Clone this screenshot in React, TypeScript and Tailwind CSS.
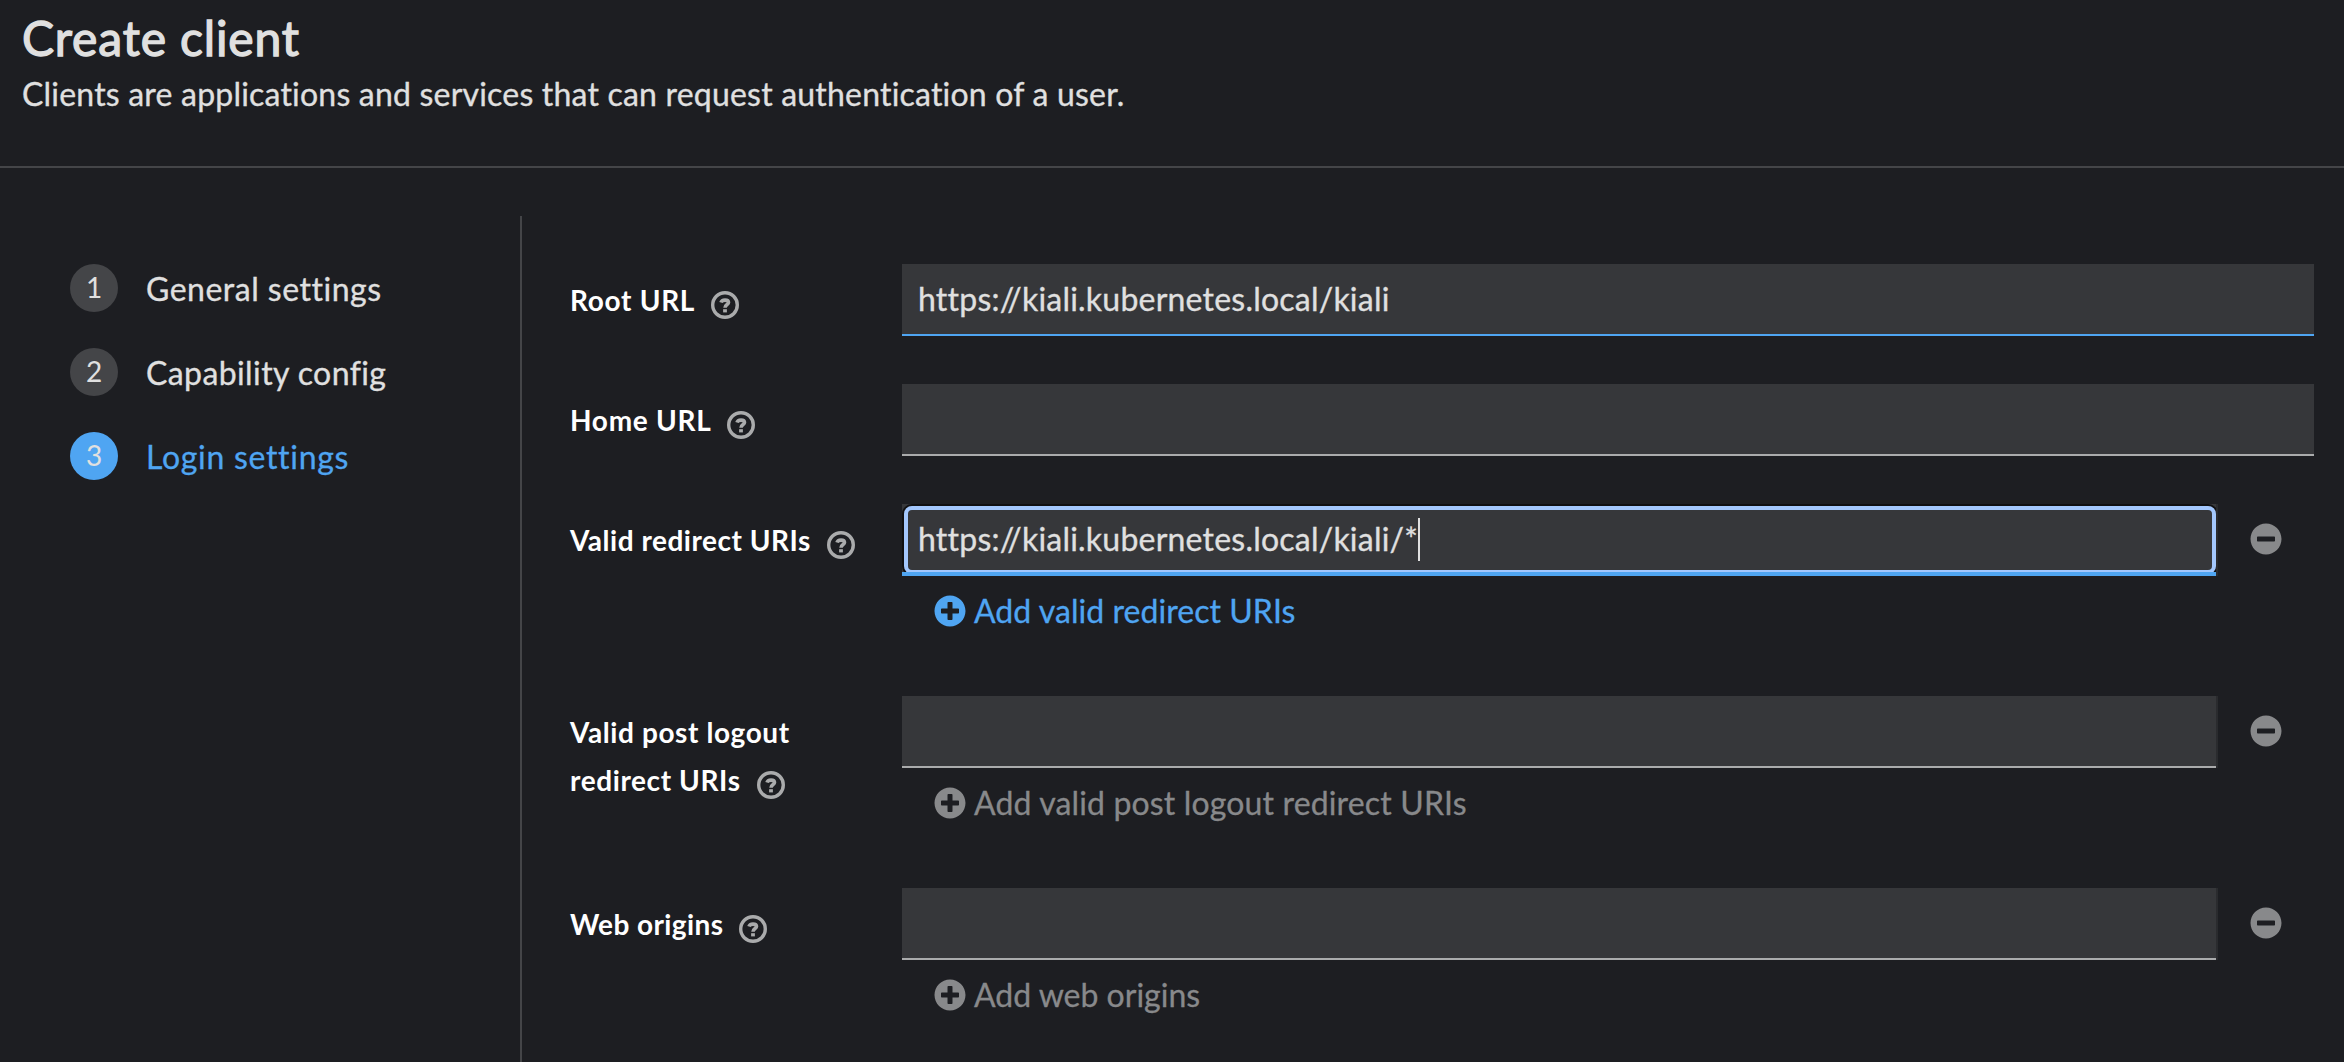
import React from "react";
import { FaMinusCircle, FaPlusCircle } from "react-icons/fa";

function HelpIcon() {
  return (
    <svg viewBox="0 0 28 28" fill="none" stroke="#aaabac" className="relative top-[8px] ml-4 inline-block size-7 align-baseline">
      <circle cx="14" cy="14" r="12.3" strokeWidth="3.4" />
      <path d="M10 11.6C10.5 9.8 12 9.1 14 9.1C16.3 9.1 17.5 10.1 17.5 11.6C17.5 13.6 14 13.6 14 16.8" strokeWidth="3.6" />
      <path d="M12.1 19.8H15.9" strokeWidth="3.2" />
    </svg>
  );
}

function Step({ n, label, track, active }: { n: number; label: string; track: string; active?: boolean }) {
  return (
    <li className="flex h-12 items-center gap-7">
      <span className={`flex size-12 items-center justify-center rounded-full pb-[2px] text-[28px] leading-none [-webkit-text-stroke:0] ${active ? "bg-[#4fa5f2]" : "bg-[#444548]"}`}>
        {n}
      </span>
      <span className={`pt-[2px] text-[32px] leading-[46px] whitespace-nowrap ${track} ${active ? "text-[#4fa5f2]" : ""}`}>{label}</span>
    </li>
  );
}

function Row({ label, track, tall, children }: { label: string; track: string; tall?: boolean; children: React.ReactNode }) {
  return (
    <div className={`flex ${tall ? "h-[192px]" : "h-[120px]"}`}>
      <div className="w-[332px] shrink-0 pt-3">
        <div className={`max-w-[300px] text-[28px] leading-[48px] font-bold text-white [-webkit-text-stroke:0] ${track}`}>
          {label}
          <HelpIcon />
        </div>
      </div>
      <div className="min-w-0 flex-1">{children}</div>
    </div>
  );
}

function Field({ value, filled }: { value?: string; filled?: boolean }) {
  return (
    <div
      role="textbox"
      className={`h-[72px] flex-1 border-b-2 bg-[#36373a] pl-4 text-[32px] leading-[70px] tracking-[0.22px] ${filled ? "border-[#4fa5f2]" : "border-[#aaabac]"}`}
    >
      {value}
    </div>
  );
}

function FocusedField({ value }: { value: string }) {
  return (
    <div role="textbox" className="relative flex h-[72px] flex-1 items-center overflow-hidden bg-[#36373a] pl-4">
      <div className="absolute top-[2px] right-0 bottom-[2px] left-[2px] rounded-[8px] border-4 border-[#a3c7fd] shadow-[0_0_0_2px_#101012]" />
      <div className="absolute inset-x-0 bottom-0 h-1 bg-[#4fa5f2]" />
      <span className="relative -top-px text-[32px] leading-[70px] tracking-[0.22px]">{value}</span>
      <span className="absolute top-[14px] left-[516px] h-[43px] w-[2px] bg-[#e0e0e0]" />
    </div>
  );
}

function MultiField({ add, track, children, active }: { add: string; track: string; children: React.ReactNode; active?: boolean }) {
  return (
    <>
      <div className="flex items-center">
        <div className="flex flex-1 border-r-2 border-[#2a2b2e]">{children}</div>
        <button className="flex w-24 justify-center pb-[2px]">
          <FaMinusCircle className="size-8 text-[#88898b]" />
        </button>
      </div>
      <button className={`mt-[11px] ml-8 flex h-12 items-center gap-2 text-[32px] leading-[48px] whitespace-nowrap ${track} ${active ? "text-[#4fa5f2]" : "text-[#88898b]"}`}>
        <FaPlusCircle className="size-8" />
        {add}
      </button>
    </>
  );
}

export default function App() {
  return (
    <div className="flex h-[1062px] w-full flex-col overflow-hidden bg-[#1d1e22] font-['Lato',sans-serif] text-[#e0e0e0] [-webkit-text-stroke:0.3px] [font-variant-ligatures:none]">
      <header className="h-[168px] shrink-0 border-b-2 border-[#444548] pt-[7px] pl-[22px]">
        <h1 className="text-[48px] leading-[62px] tracking-[0.85px] [-webkit-text-stroke:1.3px]">Create client</h1>
        <p className="text-[32px] leading-[49px] tracking-[0.2px]">
          Clients are applications and services that can request authentication of a user.
        </p>
      </header>
      <main className="flex flex-1 pt-12">
        <nav className="w-[522px] shrink-0 border-r-2 border-[#444548] pt-12 pl-[70px]">
          <ol className="flex flex-col gap-9">
            <Step n={1} label="General settings" track="tracking-[0.5px]" />
            <Step n={2} label="Capability config" track="tracking-[0.4px]" />
            <Step n={3} label="Login settings" track="tracking-[0.7px]" active />
          </ol>
        </nav>
        <form className="flex-1 pt-12 pr-[30px] pl-12">
          <Row label="Root URL" track="tracking-[0.7px]">
            <Field value="https://kiali.kubernetes.local/kiali" filled />
          </Row>
          <Row label="Home URL" track="tracking-[0.7px]">
            <Field />
          </Row>
          <Row label="Valid redirect URIs" track="tracking-[0.52px]" tall>
            <MultiField add="Add valid redirect URIs" track="tracking-[0.05px]" active>
              <FocusedField value="https://kiali.kubernetes.local/kiali/*" />
            </MultiField>
          </Row>
          <Row label="Valid post logout redirect URIs" track="tracking-[0.6px]" tall>
            <MultiField add="Add valid post logout redirect URIs" track="tracking-[0.15px]">
              <Field />
            </MultiField>
          </Row>
          <Row label="Web origins" track="tracking-[0.4px]" tall>
            <MultiField add="Add web origins" track="tracking-[0px]">
              <Field />
            </MultiField>
          </Row>
        </form>
      </main>
    </div>
  );
}
